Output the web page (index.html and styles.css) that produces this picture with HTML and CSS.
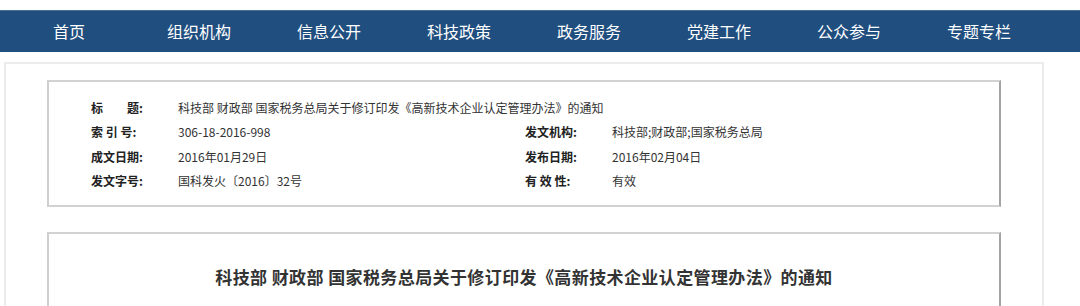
FILE: index.html
```html
<!DOCTYPE html>
<html lang="zh-CN">
<head>
  <meta charset="UTF-8" />
  <title>科技部 财政部 国家税务总局关于修订印发《高新技术企业认定管理办法》的通知</title>
  <link rel="stylesheet" href="styles.css">
</head>
<body>

  <div class="nav">
    <ul class="nav-list">
      <li>首页</li>
      <li>组织机构</li>
      <li>信息公开</li>
      <li>科技政策</li>
      <li>政务服务</li>
      <li>党建工作</li>
      <li>公众参与</li>
      <li>专题专栏</li>
    </ul>
  </div>

  <div class="panel">
    <div class="info">
      <span class="label">标　　题:</span>
      <span class="value wide">科技部 财政部 国家税务总局关于修订印发《高新技术企业认定管理办法》的通知</span>

      <span class="label">索 引 号:</span>
      <span class="value">306-18-2016-998</span>
      <span class="label">发文机构:</span>
      <span class="value">科技部;财政部;国家税务总局</span>

      <span class="label">成文日期:</span>
      <span class="value">2016年01月29日</span>
      <span class="label">发布日期:</span>
      <span class="value">2016年02月04日</span>

      <span class="label">发文字号:</span>
      <span class="value">国科发火〔2016〕32号</span>
      <span class="label">有 效 性:</span>
      <span class="value">有效</span>
    </div>

    <div class="article">
      <h2>科技部 财政部 国家税务总局关于修订印发《高新技术企业认定管理办法》的通知</h2>
    </div>
  </div>

</body>
</html>
```

FILE: styles.css
```css
body {
  margin: 0;
  background: #fff;
  font-family: "Noto Sans CJK SC", "Noto Sans", sans-serif;
  color: #333;
}
.nav {
  margin-top: 10px;
  height: 42px;
  background: #1f4e7f;
  border-top: 1px solid #4a6f96;
  box-sizing: border-box;
}
.nav-list {
  list-style: none;
  margin: 0;
  padding: 0 0 0 4px;
  display: flex;
}
.nav-list li {
  width: 130px;
  line-height: 40px;
  text-align: center;
  color: #fff;
  font-size: 16px;
}
.panel {
  margin: 10px 0 0 4px;
  width: 1040px;
  height: 244px;
  box-sizing: border-box;
  border: 2px solid #ececec;
  border-bottom: none;
  padding: 16px 41px 0 41px;
}
.info {
  display: grid;
  grid-template-columns: 87px 347px 87px auto;
  grid-auto-rows: 24.5px;
  align-items: center;
  padding: 13px 0 12px 42px;
  border-top: 2px solid #d2d2d2;
  border-left: 2px solid #cfcfcf;
  border-right: 2px solid #a4a4a4;
  border-bottom: 2px solid #d2d2d2;
  font-size: 12px;
}
.info .label {
  font-weight: bold;
  color: #222;
}
.info .value {
  color: #333;
}
.info .wide {
  grid-column: 2 / 5;
}
.article {
  margin-top: 25px;
  height: 42px;
  border-top: 2px solid #d2d2d2;
  border-left: 2px solid #cfcfcf;
  border-right: 2px solid #a4a4a4;
  padding-top: 30px;
}
.article h2 {
  margin: 0;
  text-align: center;
  font-size: 17px;
  letter-spacing: 0.4px;
  font-weight: bold;
  color: #333;
}
```
